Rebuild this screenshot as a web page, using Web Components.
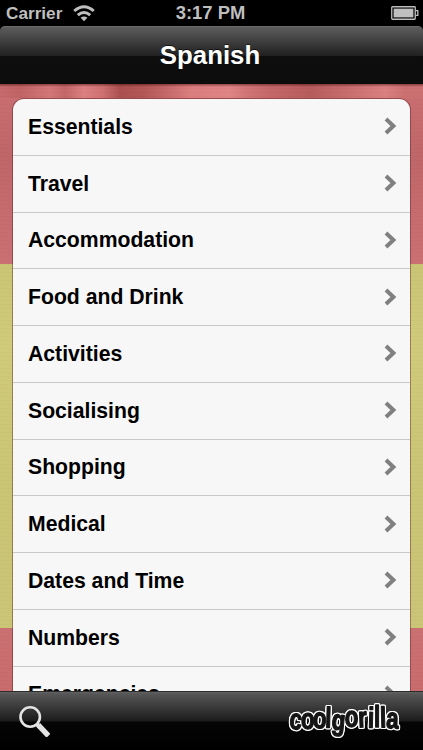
<!DOCTYPE html>
<html lang="en">
<head>
<meta charset="utf-8">
<title>Spanish</title>
<style>
    html, body { margin: 0; height: 100%; overflow: hidden; background: #000; }
    body { font-family: "Liberation Sans", Arial, sans-serif; font-weight: bold; }
</style>
</head>
<body>
<phrase-app>
    <status-bar slot="status" carrier="Carrier" time="3:17 PM"></status-bar>
    <nav-bar slot="nav">Spanish</nav-bar>
    <category-list>
        <category-row>Essentials</category-row>
        <category-row>Travel</category-row>
        <category-row>Accommodation</category-row>
        <category-row>Food and Drink</category-row>
        <category-row>Activities</category-row>
        <category-row>Socialising</category-row>
        <category-row>Shopping</category-row>
        <category-row>Medical</category-row>
        <category-row>Dates and Time</category-row>
        <category-row>Numbers</category-row>
        <category-row>Emergencies</category-row>
    </category-list>
    <tool-bar slot="tools"></tool-bar>
</phrase-app>

<script>
class PhraseApp extends HTMLElement {
    constructor() {
        super();
        this.attachShadow({ mode: 'open' });
        this.shadowRoot.innerHTML = `
            <style>
                :host { display: flex; flex-direction: column; width: 423px; height: 750px; overflow: hidden; }
                main {
                    flex: 1; min-height: 0; overflow: hidden; box-sizing: border-box; padding: 15px 13px 0;
                    background:
                        linear-gradient(rgba(60,0,0,.45), rgba(60,0,0,0) 3px) 0 0 / 100% 3px no-repeat,
                        repeating-linear-gradient(rgba(0,0,0,.02) 0 1px, transparent 1px 4px),
                        linear-gradient(90deg, #c66b6d 0, #c06466 20px, #d37778 50px, #c46768 65px, #dc8081 84px, #cf7071 103px, #ab5050 120px, #b35656 142px, #c46768 165px, #dc7d7e 190px, #df8586 230px, #d07475 248px, #c66869 270px, #b75c5d 310px, #c46a6b 340px, #db8080 385px, #cc7172 405px, #cc7172) 0 0 / 100% 14px no-repeat,
                        linear-gradient(#cb7072 0, #bf6669 70px, #cb7072 180px, #c9c574 180px, #d0cb7b 260px, #c9c574 400px, #cbc577 544px, #cb7072 544px, #c86c6e 100%);
                }
            </style>
            <slot name="status"></slot>
            <slot name="nav"></slot>
            <main><slot></slot></main>
            <slot name="tools"></slot>
        `;
    }
}

class StatusBar extends HTMLElement {
    constructor() {
        super();
        this.attachShadow({ mode: 'open' });
        this.shadowRoot.innerHTML = `
            <style>
                :host { display: grid; grid-template-columns: 1fr auto 1fr; align-items: center; flex: none; height: 26px; padding: 0 6px; background: #000; color: #bfbfbf; font-size: 18.4px; line-height: 26px; }
                .left { display: flex; align-items: center; gap: 11px; }
                #carrier { font-size: 17.2px; }
                #time { margin-right: 2px; }
                .battery { justify-self: end; margin-right: -2px; }
                svg { display: block; }
            </style>
            <div class="left">
                <span id="carrier"></span>
                <svg width="22" height="18" viewBox="0 0 22 18" fill="none" stroke="#bfbfbf" stroke-width="2.9">
                    <path d="M1.2 7Q11-1.4 20.8 7M4.8 11.1Q11 5.7 17.2 11.1"/>
                    <path d="M11 17.2 7.6 13.8Q11 11 14.4 13.8Z" fill="#bfbfbf" stroke="none"/>
                </svg>
            </div>
            <span id="time"></span>
            <svg class="battery" width="28" height="14" viewBox="0 0 28 14">
                <rect x=".75" y=".75" width="23.5" height="12.5" rx=".8" fill="none" stroke="#bfbfbf" stroke-width="1.3"/>
                <rect x="2.6" y="2.6" width="19.8" height="8.8" fill="#bfbfbf"/>
                <path d="M24.5 4.6h2.3v4.8h-2.3" fill="none" stroke="#bfbfbf" stroke-width="1.3"/>
            </svg>
        `;
    }

    connectedCallback() {
        this.shadowRoot.querySelector('#carrier').textContent = this.getAttribute('carrier');
        this.shadowRoot.querySelector('#time').textContent = this.getAttribute('time');
    }
}

class NavBar extends HTMLElement {
    constructor() {
        super();
        this.attachShadow({ mode: 'open' });
        this.shadowRoot.innerHTML = `
            <style>
                :host {
                    display: flex; justify-content: center; align-items: center; flex: none;
                    box-sizing: border-box; height: 58px; padding-right: 3px; border-top: 1px solid #6c6c6c; border-radius: 5px 5px 0 0;
                    background: linear-gradient(#5c5c5c, #212121 50%, #0e0e0e 51%, #0c0c0c);
                    color: #fff; font-size: 25.8px; text-shadow: 0 -1px 0 rgba(0,0,0,.6);
                }
            </style>
            <slot></slot>
        `;
    }
}

class CategoryList extends HTMLElement {
    constructor() {
        super();
        this.attachShadow({ mode: 'open' });
        this.shadowRoot.innerHTML = `
            <style>
                :host { display: block; overflow: hidden; border-radius: 11px 11px 0 0; background: #f7f7f7; box-shadow: 0 0 0 1px rgba(90,30,30,.45); }
            </style>
            <slot></slot>
        `;
    }
}

class CategoryRow extends HTMLElement {
    constructor() {
        super();
        this.attachShadow({ mode: 'open' });
        this.shadowRoot.innerHTML = `
            <style>
                :host { display: flex; align-items: center; justify-content: space-between; box-sizing: border-box; height: 56.75px; padding: 0 13px 0 15px; border-bottom: 1px solid #c9c9c9; color: #000; font-size: 21.2px; }
                svg { display: block; margin-top: -1px; }
            </style>
            <slot></slot>
            <svg width="13" height="18" viewBox="0 0 13 18" fill="none" stroke="#808080" stroke-width="4">
                <path d="M2 2 9.4 9 2 16"/>
            </svg>
        `;
    }
}

class ToolBar extends HTMLElement {
    constructor() {
        super();
        this.attachShadow({ mode: 'open' });
        this.shadowRoot.innerHTML = `
            <style>
                :host {
                    display: flex; align-items: center; justify-content: space-between; flex: none;
                    box-sizing: border-box; height: 59px; padding: 0 20px 0 18px;
                    border-top: 1px solid #2b2b2b;
                    background: linear-gradient(#636363 0, #565656 2px, #1c1c1c 29px, #050505 30px, #000);
                }
                svg { display: block; }
                text { font-family: "Liberation Sans", Arial, sans-serif; font-weight: bold; }
                .logo {
                    overflow: visible;
                    filter: drop-shadow(1px 0 0 #fff) drop-shadow(-1px 0 0 #fff) drop-shadow(0 1px 0 #fff) drop-shadow(0 -1px 0 #fff);
                }
            </style>
            <svg width="32" height="32" viewBox="0 0 32 32" fill="none" stroke="#e4e4e4">
                <circle cx="12.2" cy="12" r="9.7" stroke-width="2.6"/>
                <path d="M18.8 19.2 22 22.4" stroke-width="4"/>
                <path d="M22 21.8 28.6 28.8" stroke-width="5.4" stroke-linecap="square"/>
            </svg>
            <svg class="logo" width="116" height="48" viewBox="0 0 116 48">
                <!-- every letter has its own x, baseline and tilt; x is in units of the .77 scale -->
                <text transform="scale(.77 1)" font-size="29"
                    x="2.4 17.4 33.2 49.4 57 75 92.8 105 113 121 128.5"
                    y="31 31 30.5 30.5 32 30.5 30.5 30.5 30.5 30.5 31"
                    rotate="8 5 4 2 7 0 -3 2 0 -2 2"
                    fill="#151515" stroke="#151515" stroke-width="1.3" stroke-linejoin="round">coolgorilla</text>
            </svg>
        `;
    }
}

customElements.define('phrase-app', PhraseApp);
customElements.define('status-bar', StatusBar);
customElements.define('nav-bar', NavBar);
customElements.define('category-list', CategoryList);
customElements.define('category-row', CategoryRow);
customElements.define('tool-bar', ToolBar);
</script>
</body>
</html>
